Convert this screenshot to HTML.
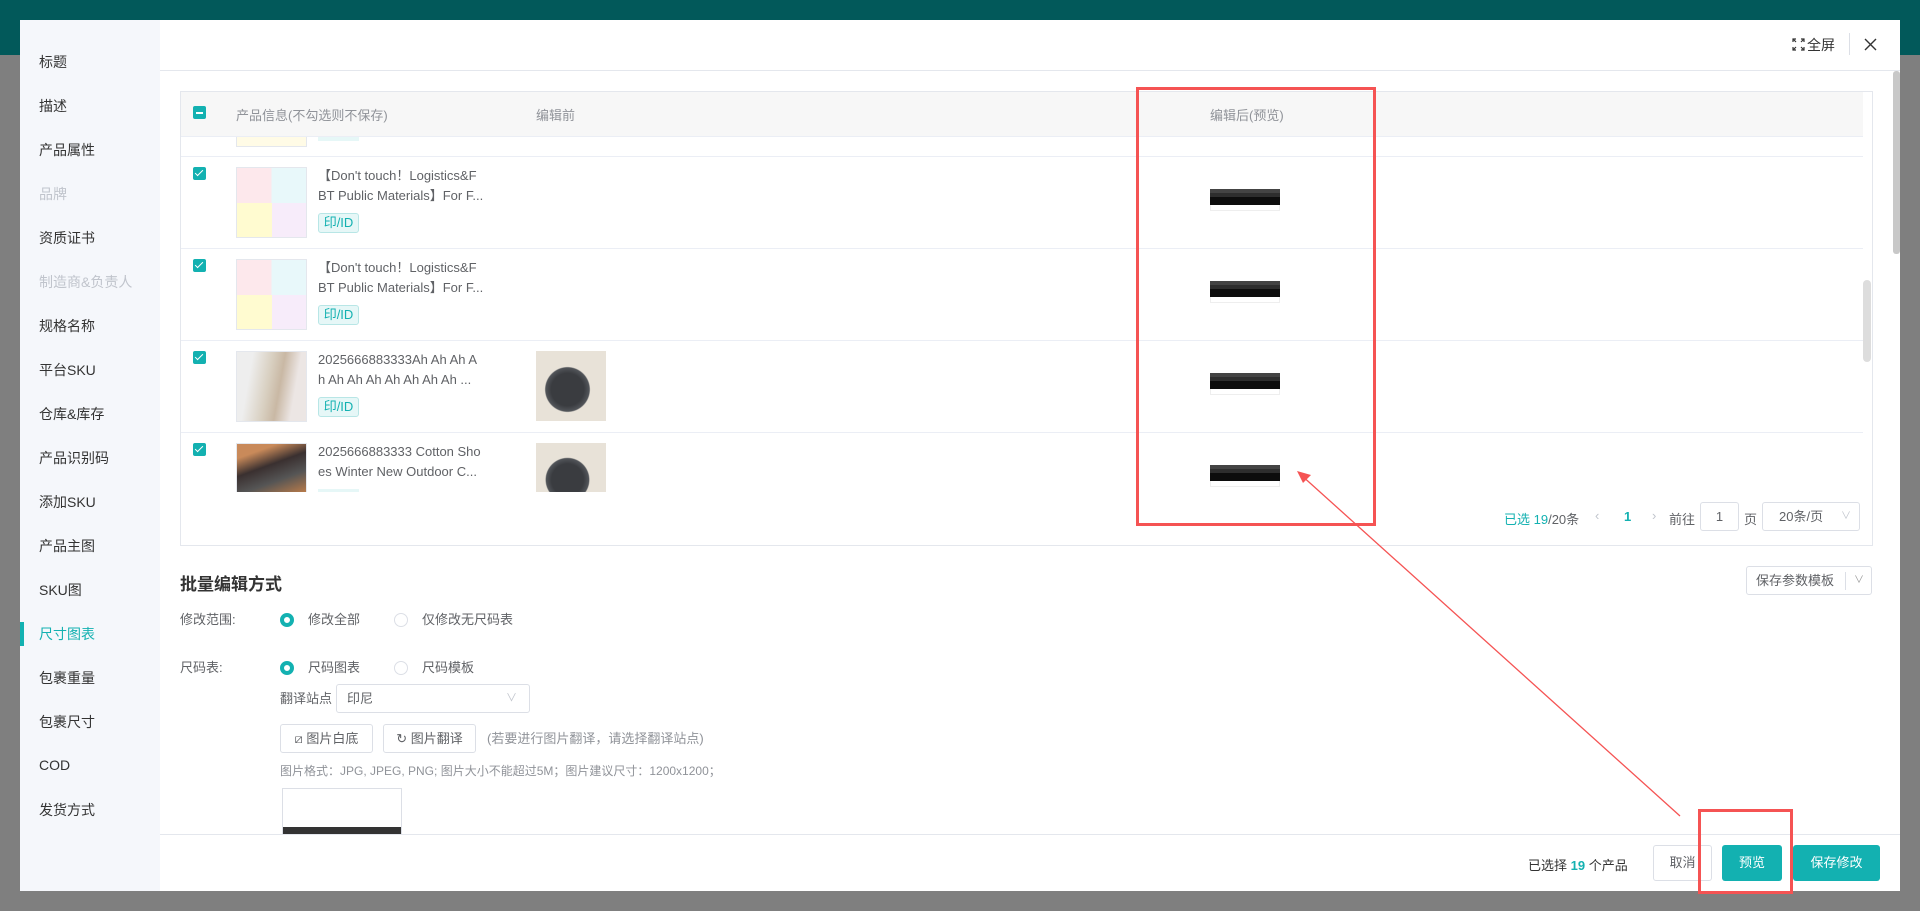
<!DOCTYPE html>
<html><head><meta charset="utf-8"><style>
*{margin:0;padding:0;box-sizing:border-box}
body{width:1920px;height:911px;overflow:hidden;background:#7f7f7f;font-family:"Liberation Sans","Noto Sans CJK SC",sans-serif;position:relative;color:#606266}
.a{position:absolute}
.top{left:0;top:0;width:1920px;height:55px;background:#02595a}
.modal{left:20px;top:20px;width:1880px;height:871px;background:#fff}
.side{left:20px;top:20px;width:140px;height:871px;background:#f5f7fb}
.si{position:absolute;left:39px;font-size:14px;color:#333;line-height:20px}
.dis{color:#c0c4cc}
.cb{position:absolute;width:13px;height:13px;background:#13b1b1;border-radius:2px}
.cb:after{content:"";position:absolute;left:4px;top:1px;width:3px;height:7px;border:solid #fff;border-width:0 1.5px 1.5px 0;transform:rotate(45deg)}
.cbi{position:absolute;width:13px;height:13px;background:#13b1b1;border-radius:2px}
.cbi:after{content:"";position:absolute;left:3px;top:5.5px;width:7px;height:2px;background:#fff}
.sep{position:absolute;left:181px;width:1682px;height:1px;background:#ebeef5}
.pimg{position:absolute;width:71px;height:71px;border:1px solid #e4e7ed;background:#fff;overflow:hidden}
.pt{position:absolute;left:318px;font-size:13px;line-height:20px;color:#606266;width:180px;white-space:nowrap;overflow:hidden}
.tag{position:absolute;left:318px;width:41px;height:20px;background:#e6f7f7;border:1px solid #b8e6e6;border-radius:3px;color:#13b1b1;font-size:13px;line-height:18px;text-align:center}
.th{position:absolute;left:1210px;width:70px;height:26px;background:#fff}
.th .h1{height:4px;background:#444}
.th .h2{height:4px;background:#2e2e2e}
.th .h3{height:8px;background:#0d0d0d}
.th .h4{height:6px;border:1px solid #eee;border-top:none}
.btn{position:absolute;border:1px solid #dcdfe6;border-radius:3px;background:#fff;font-size:13px;color:#606266;text-align:center}
.radio{position:absolute;width:14px;height:14px;border-radius:50%;border:1px solid #dcdfe6;background:#fff}
.radio.on{border:4px solid #13b1b1}
.lbl{position:absolute;font-size:13px;color:#606266;line-height:20px}
.red{position:absolute;border:3px solid #f55353}
</style></head><body>
<div class="a top"></div>
<div class="a" style="left:0;top:55px;width:1920px;height:856px;background:#7f7f7f"></div>
<div class="a modal"></div>
<div class="a side"></div>
<div class="si" style="top:52px">标题</div>
<div class="si" style="top:96px">描述</div>
<div class="si" style="top:140px">产品属性</div>
<div class="si dis" style="top:184px">品牌</div>
<div class="si" style="top:228px">资质证书</div>
<div class="si dis" style="top:272px">制造商&amp;负责人</div>
<div class="si" style="top:316px">规格名称</div>
<div class="si" style="top:360px">平台SKU</div>
<div class="si" style="top:404px">仓库&amp;库存</div>
<div class="si" style="top:448px">产品识别码</div>
<div class="si" style="top:492px">添加SKU</div>
<div class="si" style="top:536px">产品主图</div>
<div class="si" style="top:580px">SKU图</div>
<div class="si" style="top:624px;color:#13b1b1">尺寸图表</div>
<div class="a" style="left:20px;top:622px;width:4px;height:24px;background:#13b1b1"></div>
<div class="si" style="top:668px">包裹重量</div>
<div class="si" style="top:712px">包裹尺寸</div>
<div class="si" style="top:755px">COD</div>
<div class="si" style="top:800px">发货方式</div>

<div class="a" style="left:160px;top:70px;width:1740px;height:1px;background:#e4e7ed"></div>
<svg class="a" style="left:1792px;top:38px" width="13" height="13" viewBox="0 0 13 13" fill="none" stroke="#333" stroke-width="1.2"><path d="M1 4V1h3M9 1h3v3M12 9v3H9M4 12H1V9M1 1l3 3M12 1L9 4M12 12L9 9M1 12l3-3"/></svg>
<div class="a" style="left:1807px;top:35px;font-size:14px;color:#333">全屏</div>
<div class="a" style="left:1849px;top:33px;width:1px;height:22px;background:#dcdfe6"></div>
<svg class="a" style="left:1864px;top:38px" width="13" height="13" viewBox="0 0 13 13" stroke="#333" stroke-width="1.4"><path d="M1 1l11 11M12 1L1 12"/></svg>
<div class="a" style="left:1893px;top:71px;width:7px;height:183px;background:#c8c8c8;border-radius:3px"></div>

<div class="a" style="left:180px;top:91px;width:1693px;height:455px;border:1px solid #e4e7ed"></div>
<div class="a" style="left:181px;top:92px;width:1682px;height:45px;background:#f7f7f7;border-bottom:1px solid #ebeef5"></div>
<div class="cbi" style="left:193px;top:106px"></div>
<div class="a" style="left:236px;top:105px;font-size:13px;color:#909399">产品信息(不勾选则不保存)</div>
<div class="a" style="left:536px;top:105px;font-size:13px;color:#909399">编辑前</div>
<div class="a" style="left:1210px;top:105px;font-size:13px;color:#909399">编辑后(预览)</div>
<div class="a" style="left:1863px;top:280px;width:8px;height:82px;background:#ddd;border-radius:4px"></div>

<div class="pimg" style="left:236px;top:137px;height:10px;border-top:none;background:#fffbe6"></div>
<div class="a" style="left:318px;top:137px;width:41px;height:4px;background:#e6f7f7"></div>
<div class="sep" style="top:156px"></div>
<div class="sep" style="top:248px"></div>
<div class="sep" style="top:340px"></div>
<div class="sep" style="top:432px"></div>

<div class="cb" style="left:193px;top:167px"></div>
<div class="pimg" style="left:236px;top:167px;background:linear-gradient(90deg,#fde8ec 50%,#e8f8fa 50%)"><div style="position:absolute;left:0;top:35px;width:70px;height:36px;background:linear-gradient(90deg,#fffbd0 50%,#f7ecfa 50%)"></div></div>
<div class="pt" style="top:166px">【Don't touch！Logistics&amp;F</div>
<div class="pt" style="top:186px">BT Public Materials】For F...</div>
<div class="tag" style="top:213px">印/ID</div>
<div class="th" style="top:189px"><div class="h1"></div><div class="h2"></div><div class="h3"></div><div class="h4"></div></div>

<div class="cb" style="left:193px;top:259px"></div>
<div class="pimg" style="left:236px;top:259px;background:linear-gradient(90deg,#fde8ec 50%,#e8f8fa 50%)"><div style="position:absolute;left:0;top:35px;width:70px;height:36px;background:linear-gradient(90deg,#fffbd0 50%,#f7ecfa 50%)"></div></div>
<div class="pt" style="top:258px">【Don't touch！Logistics&amp;F</div>
<div class="pt" style="top:278px">BT Public Materials】For F...</div>
<div class="tag" style="top:305px">印/ID</div>
<div class="th" style="top:281px"><div class="h1"></div><div class="h2"></div><div class="h3"></div><div class="h4"></div></div>

<div class="cb" style="left:193px;top:351px"></div>
<div class="pimg" style="left:236px;top:351px;background:linear-gradient(100deg,#eee 20%,#d8cfc0 45%,#c9b8a4 60%,#ece6e4 80%)"></div>
<div class="pt" style="top:350px">2025666883333Ah Ah Ah A</div>
<div class="pt" style="top:370px">h Ah Ah Ah Ah Ah Ah Ah ...</div>
<div class="tag" style="top:397px">印/ID</div>
<div class="a" style="left:536px;top:351px;width:70px;height:70px;background:radial-gradient(circle at 45% 55%,#3a3c40 30%,#52555a 40%,#e8e2d8 42%)"></div>
<div class="th" style="top:373px"><div class="h1"></div><div class="h2"></div><div class="h3"></div><div class="h4"></div></div>

<div class="cb" style="left:193px;top:443px"></div>
<div class="pimg" style="left:236px;top:443px;height:49px;border-bottom:none;background:linear-gradient(160deg,#c98a5a 20%,#3a3030 45%,#555 70%,#b77a4a)"></div>
<div class="pt" style="top:442px">2025666883333 Cotton Sho</div>
<div class="pt" style="top:462px">es Winter New Outdoor C...</div>
<div class="a" style="left:318px;top:489px;width:41px;height:3px;background:#e6f7f7"></div>
<div class="a" style="left:536px;top:443px;width:70px;height:49px;background:radial-gradient(circle at 45% 75%,#3a3c40 30%,#52555a 40%,#e8e2d8 42%)"></div>
<div class="th" style="top:465px"><div class="h1"></div><div class="h2"></div><div class="h3"></div><div class="h4"></div></div>

<div class="a" style="left:1504px;top:509px;font-size:13px;color:#606266"><span style="color:#13b1b1">已选 19</span>/20条</div>
<div class="a" style="left:1595px;top:508px;font-size:13px;color:#c0c4cc">‹</div>
<div class="a" style="left:1624px;top:509px;font-size:13px;color:#13b1b1;font-weight:bold">1</div>
<div class="a" style="left:1652px;top:508px;font-size:13px;color:#c0c4cc">›</div>
<div class="a" style="left:1669px;top:509px;font-size:13px">前往</div>
<div class="btn" style="left:1700px;top:502px;width:39px;height:29px;line-height:27px">1</div>
<div class="a" style="left:1744px;top:509px;font-size:13px">页</div>
<div class="btn" style="left:1762px;top:502px;width:98px;height:29px;line-height:27px;text-align:left;padding-left:16px">20条/页<span style="position:absolute;right:8px;color:#c0c4cc;font-size:10px">∨</span></div>

<div class="a" style="left:180px;top:570px;font-size:17px;font-weight:bold;color:#333">批量编辑方式</div>
<div class="btn" style="left:1746px;top:566px;width:126px;height:29px;line-height:27px;text-align:left;padding-left:9px">保存参数模板<span style="position:absolute;left:98px;top:5px;width:1px;height:18px;background:#dcdfe6"></span><span style="position:absolute;right:7px;color:#999;font-size:10px">∨</span></div>

<div class="lbl" style="left:180px;top:610px">修改范围:</div>
<div class="radio on" style="left:280px;top:613px"></div>
<div class="lbl" style="left:308px;top:610px">修改全部</div>
<div class="radio" style="left:394px;top:613px"></div>
<div class="lbl" style="left:422px;top:610px">仅修改无尺码表</div>

<div class="lbl" style="left:180px;top:658px">尺码表:</div>
<div class="radio on" style="left:280px;top:661px"></div>
<div class="lbl" style="left:308px;top:658px">尺码图表</div>
<div class="radio" style="left:394px;top:661px"></div>
<div class="lbl" style="left:422px;top:658px">尺码模板</div>

<div class="lbl" style="left:280px;top:689px">翻译站点</div>
<div class="btn" style="left:336px;top:684px;width:194px;height:29px;line-height:27px;text-align:left;padding-left:10px">印尼<span style="position:absolute;right:12px;color:#c0c4cc;font-size:11px">∨</span></div>

<div class="btn" style="left:280px;top:724px;width:93px;height:29px;line-height:27px">⧄ 图片白底</div>
<div class="btn" style="left:383px;top:724px;width:93px;height:29px;line-height:27px">↻ 图片翻译</div>
<div class="lbl" style="left:487px;top:729px;color:#909399">(若要进行图片翻译，请选择翻译站点)</div>
<div class="a" style="left:280px;top:762px;font-size:12px;color:#909399">图片格式：JPG, JPEG, PNG; 图片大小不能超过5M；图片建议尺寸：1200x1200；</div>
<div class="a" style="left:282px;top:788px;width:120px;height:46px;border:1px solid #dcdfe6;border-bottom:none"><div style="position:absolute;left:0;bottom:0;width:118px;height:7px;background:#333"></div></div>

<div class="a" style="left:160px;top:834px;width:1740px;height:1px;background:#e4e7ed"></div>
<div class="a" style="left:1528px;top:855px;font-size:13px;color:#333">已选择 <b style="color:#13b1b1">19</b> 个产品</div>
<div class="btn" style="left:1653px;top:845px;width:59px;height:36px;line-height:34px">取消</div>
<div class="a" style="left:1722px;top:845px;width:60px;height:36px;background:#13b1b1;border-radius:3px;color:#fff;font-size:13px;line-height:36px;text-align:center">预览</div>
<div class="a" style="left:1793px;top:845px;width:87px;height:36px;background:#13b1b1;border-radius:3px;color:#fff;font-size:13px;line-height:36px;text-align:center">保存修改</div>

<div class="red" style="left:1136px;top:87px;width:240px;height:439px"></div>
<div class="red" style="left:1698px;top:809px;width:95px;height:85px"></div>
<svg class="a" style="left:0;top:0" width="1920" height="911"><line x1="1680" y1="816" x2="1300" y2="474" stroke="#f55353" stroke-width="1.3"/><path d="M1297 471l14 4-8 8z" fill="#f55353"/></svg>
</body></html>
